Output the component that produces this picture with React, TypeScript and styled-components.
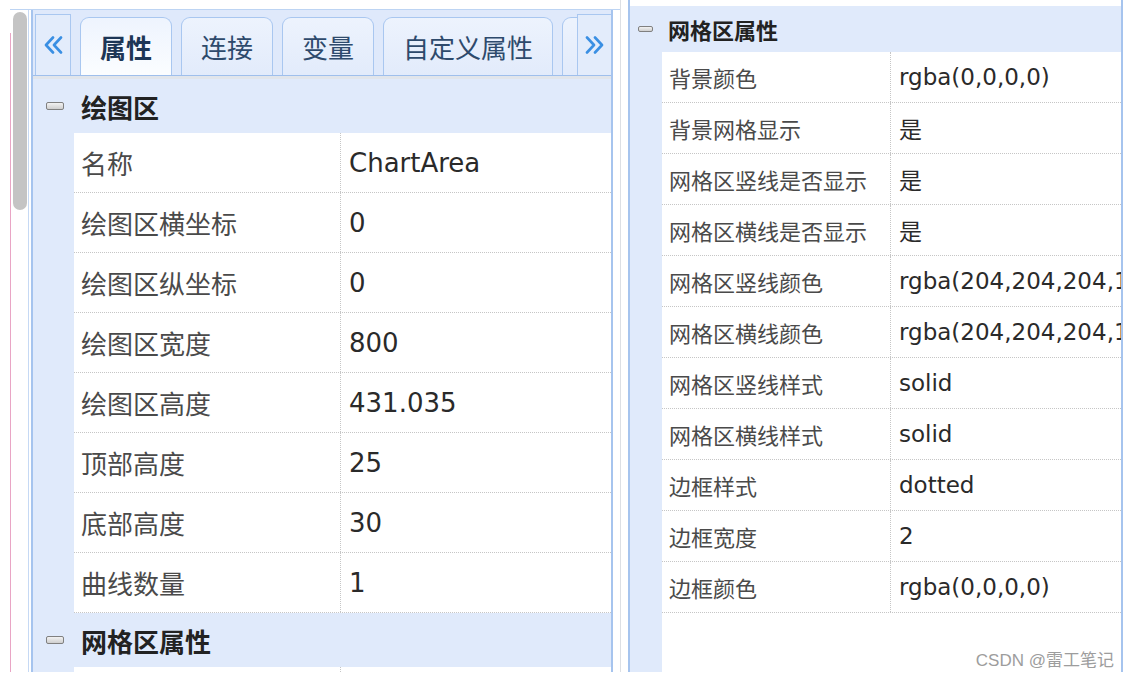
import styled, { createGlobalStyle } from 'styled-components'

type Prop = { name: string; value: string }

const chartArea: Prop[] = [
  { name: '名称', value: 'ChartArea' },
  { name: '绘图区横坐标', value: '0' },
  { name: '绘图区纵坐标', value: '0' },
  { name: '绘图区宽度', value: '800' },
  { name: '绘图区高度', value: '431.035' },
  { name: '顶部高度', value: '25' },
  { name: '底部高度', value: '30' },
  { name: '曲线数量', value: '1' },
]

const gridArea: Prop[] = [
  { name: '背景颜色', value: 'rgba(0,0,0,0)' },
  { name: '背景网格显示', value: '是' },
  { name: '网格区竖线是否显示', value: '是' },
  { name: '网格区横线是否显示', value: '是' },
  { name: '网格区竖线颜色', value: 'rgba(204,204,204,1)' },
  { name: '网格区横线颜色', value: 'rgba(204,204,204,1)' },
  { name: '网格区竖线样式', value: 'solid' },
  { name: '网格区横线样式', value: 'solid' },
  { name: '边框样式', value: 'dotted' },
  { name: '边框宽度', value: '2' },
  { name: '边框颜色', value: 'rgba(0,0,0,0)' },
]

const tabs = ['属性', '连接', '变量', '自定义属性', '样式']

// sizes for the two grids (the right one is a smaller capture)
type Metrics = { font: number; vfont: number; row: number; head: number; gutter: number; nameW: number; iconW: number; iconH: number; iconLeft: number; gap: number; pad: number }

const big: Metrics = { font: 26, vfont: 26, row: 60, head: 54, gutter: 41, nameW: 267, iconW: 18, iconH: 8, iconLeft: 13, gap: 17, pad: 7 }
const small: Metrics = { font: 22, vfont: 23, row: 51, head: 46, gutter: 32, nameW: 229, iconW: 15, iconH: 6, iconLeft: 8, gap: 15, pad: 7 }

const GlobalStyle = createGlobalStyle`
  html, body { margin: 0; padding: 0; background: #fff; }
  body { font-family: "DejaVu Sans", "Noto Sans CJK SC", sans-serif; }
`

const Page = styled.div`
  position: relative;
  display: flex;
  align-items: flex-start;
  width: 1129px;
  height: 679px;
  overflow: hidden;
`

const LeftPane = styled.div`
  display: flex;
  box-sizing: border-box;
  width: 610px;
  height: 663px;
  margin: 9px 0 0 10px;
  border-top: 1px solid #bdd4f3;
`

const ScrollTrack = styled.div`
  width: 18px;
  flex-shrink: 0;
  box-sizing: border-box;
  padding: 2px 1px 0 3px;
  background: linear-gradient(#e9a5c5, #e9a5c5) 0 23px / 1px 100% no-repeat;
`

const Thumb = styled.div`
  height: 198px;
  border-radius: 7px;
  background: #c4c4c4;
`

const Shell = styled.div`
  flex: 1;
  display: flex;
  border-left: 1px solid #c6d9f4;
  padding: 0 7px 0 2px;
  background: #fff;
`

const Frame = styled.div<{ $top?: number }>`
  flex: 1;
  display: flex;
  flex-direction: column;
  min-width: 0;
  overflow: hidden;
  padding-top: ${p => p.$top ?? 0}px;
  border-left: 2px solid #a6c4ee;
  border-right: 2px solid #a6c4ee;
  background: #fff;
`

const TabBar = styled.div`
  display: flex;
  align-items: flex-end;
  flex-shrink: 0;
  height: 65px;
  padding-left: 2px;
  background: #dfe9fb;
  border-bottom: 1px solid #9fbfec;
  box-shadow: 0 3px 0 #e1e5eb;
  margin-bottom: 3px;
`

const ScrollButton = styled.div<{ $side: 'left' | 'right' }>`
  flex-shrink: 0;
  box-sizing: border-box;
  width: ${p => (p.$side === 'left' ? 36 : 34)}px;
  height: 61px;
  display: flex;
  align-items: center;
  justify-content: center;
  border: 1px solid #a9c7f0;
  border-bottom: none;
  ${p => (p.$side === 'right' ? 'border-right: none;' : '')}
  background: #e3ecfb;
`

const TabStrip = styled.div`
  flex: 1;
  min-width: 0;
  display: flex;
  align-items: flex-end;
  gap: 9px;
  padding-left: 9px;
  overflow: hidden;
  height: 100%;
`

const Tab = styled.div<{ $active?: boolean }>`
  flex-shrink: 0;
  box-sizing: border-box;
  height: 58px;
  padding: 0 19px 1px;
  display: flex;
  align-items: center;
  justify-content: center;
  border: 1px solid #a9c7f0;
  border-bottom: none;
  border-radius: 9px 9px 0 0;
  font-size: 26px;
  font-weight: ${p => (p.$active ? 700 : 400)};
  color: ${p => (p.$active ? '#1d3656' : '#2e4a6c')};
  background: ${p =>
    p.$active
      ? 'linear-gradient(#eef4fe, #fbfdff)'
      : 'linear-gradient(#edf3fd, #e2ebfb)'};
`

const Body = styled.div<{ $gutter: number }>`
  flex: 1;
  display: flex;
  flex-direction: column;
  background: linear-gradient(to right, #e0eafb ${p => p.$gutter}px, #fff ${p => p.$gutter}px);
`

const GroupHeader = styled.div<{ $m: Metrics }>`
  flex-shrink: 0;
  display: flex;
  align-items: center;
  height: ${p => p.$m.head}px;
  padding-left: ${p => p.$m.iconLeft}px;
  gap: ${p => p.$m.gap}px;
  background: #e0eafb;
  font-size: ${p => p.$m.font}px;
  font-weight: 700;
  color: #222;
`

const Collapse = styled.span<{ $w: number; $h: number }>`
  box-sizing: border-box;
  width: ${p => p.$w}px;
  height: ${p => p.$h}px;
  border: 1.5px solid #808080;
  border-radius: 2px;
  background: linear-gradient(#f2f2f2, #cfcfcf);
`

const Row = styled.div<{ $m: Metrics }>`
  flex-shrink: 0;
  display: flex;
  box-sizing: border-box;
  height: ${p => p.$m.row}px;
  margin-left: ${p => p.$m.gutter}px;
  background: #fff;
  border-bottom: 1px dotted #c6c6c6;
`

const NameCell = styled.div<{ $w: number; $pad: number; $size: number }>`
  flex-shrink: 0;
  box-sizing: border-box;
  width: ${p => p.$w}px;
  display: flex;
  align-items: center;
  padding-left: ${p => p.$pad}px;
  border-right: 1px dotted #c6c6c6;
  font-size: ${p => p.$size}px;
  color: #4a4a4a;
  white-space: nowrap;
  overflow: hidden;
`

const ValueCell = styled.div<{ $pad: number; $size: number }>`
  flex: 1;
  min-width: 0;
  display: flex;
  align-items: center;
  padding-left: ${p => p.$pad}px;
  font-size: ${p => p.$size}px;
  color: #2a2a2a;
  white-space: nowrap;
  overflow: hidden;
`

const RightPane = styled.div`
  display: flex;
  box-sizing: border-box;
  width: 503px;
  height: 672px;
  border-left: 1px solid #dcdfe4;
  padding-left: 7px;
`

const Watermark = styled.div`
  position: absolute;
  right: 15px;
  bottom: 8px;
  font-family: "Liberation Sans", "Noto Sans CJK SC", sans-serif;
  font-size: 17px;
  color: #9d9d9d;
`

const Chevrons = ({ dir }: { dir: 'left' | 'right' }) => (
  <svg width="20" height="18" viewBox="0 0 20 18" fill="none" stroke="#3a8fe3" strokeWidth="2.6" strokeLinecap="round" strokeLinejoin="round">
    {dir === 'left' ? (
      <>
        <polyline points="10,1.5 3,9 10,16.5" />
        <polyline points="18,1.5 11,9 18,16.5" />
      </>
    ) : (
      <>
        <polyline points="2,1.5 9,9 2,16.5" />
        <polyline points="10,1.5 17,9 10,16.5" />
      </>
    )}
  </svg>
)

const Group = ({ title, m }: { title: string; m: Metrics }) => (
  <GroupHeader $m={m}>
    <Collapse $w={m.iconW} $h={m.iconH} />
    <span>{title}</span>
  </GroupHeader>
)

const PropRow = ({ prop, m }: { prop: Prop; m: Metrics }) => (
  <Row $m={m}>
    <NameCell $w={m.nameW} $pad={m.pad} $size={m.font}>{prop.name}</NameCell>
    <ValueCell $pad={m.pad + 1} $size={m.vfont}>{prop.value}</ValueCell>
  </Row>
)

export default function App() {
  return (
    <>
      <GlobalStyle />
      <Page>
        <LeftPane>
          <ScrollTrack>
            <Thumb />
          </ScrollTrack>
          <Shell>
            <Frame>
              <TabBar>
                <ScrollButton $side="left">
                  <Chevrons dir="left" />
                </ScrollButton>
                <TabStrip>
                  {tabs.map((t, i) => (
                    <Tab key={t} $active={i === 0}>{t}</Tab>
                  ))}
                </TabStrip>
                <ScrollButton $side="right">
                  <Chevrons dir="right" />
                </ScrollButton>
              </TabBar>
              <Body $gutter={big.gutter}>
                <Group title="绘图区" m={big} />
                {chartArea.map(p => (
                  <PropRow key={p.name} prop={p} m={big} />
                ))}
                <Group title="网格区属性" m={big} />
                <PropRow prop={gridArea[0]} m={big} />
              </Body>
            </Frame>
          </Shell>
        </LeftPane>
        <RightPane>
          <Frame $top={6}>
            <Body $gutter={small.gutter}>
              <Group title="网格区属性" m={small} />
              {gridArea.map(p => (
                <PropRow key={p.name} prop={p} m={small} />
              ))}
            </Body>
          </Frame>
        </RightPane>
        <Watermark>CSDN @雷工笔记</Watermark>
      </Page>
    </>
  )
}
